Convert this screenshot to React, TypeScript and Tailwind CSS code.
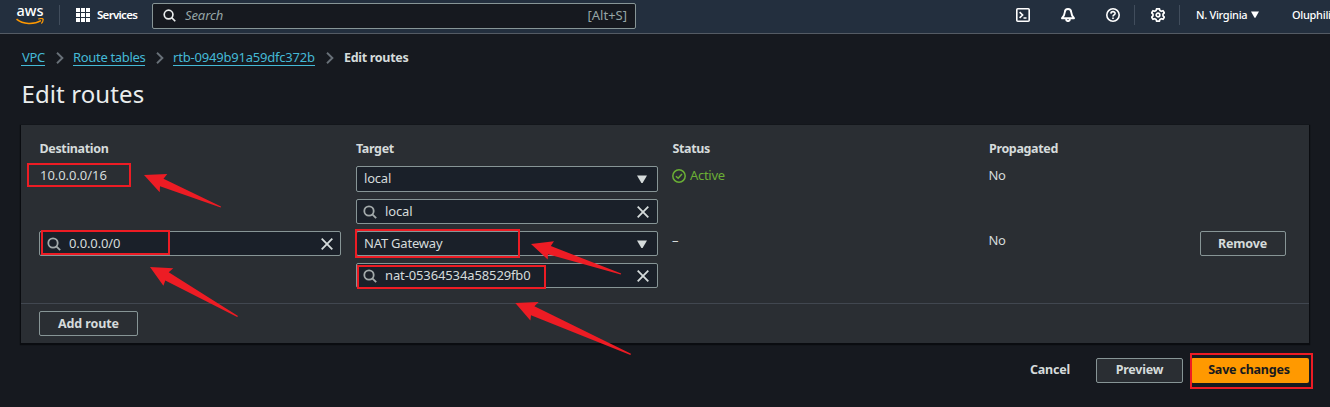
import type { ReactNode } from 'react';

const SearchIcon = ({ className }: { className: string }) => (
  <svg className={className} viewBox="0 0 14 14" fill="none" stroke="currentColor" strokeWidth="1.8">
    <circle cx="6" cy="6" r="4.7" />
    <path d="M9.3 9.3 13.2 13.2" />
  </svg>
);

const CloseIcon = () => (
  <svg className="size-3 shrink-0" viewBox="0 0 12 12" fill="none" stroke="currentColor" strokeWidth="1.8">
    <path d="M.7.7 11.3 11.3M11.3.7.7 11.3" />
  </svg>
);

const Caret = ({ className }: { className: string }) => (
  <svg className={className} viewBox="0 0 10 8" fill="currentColor">
    <path d="M0 .4h10L5.6 8H4.4Z" />
  </svg>
);

const Crumb = ({ children, className }: { children: ReactNode; className: string }) => (
  <a className={`block h-4 border-b border-[#44b9d6] leading-[15px] text-[#44b9d6] ${className}`}>{children}</a>
);

const Chevron = () => (
  <svg className="mr-[9px] ml-[11px] h-3 w-2 shrink-0 text-[#687078]" viewBox="0 0 8 12" fill="none" stroke="currentColor" strokeWidth="1.9">
    <path d="M1 .8 6.4 6 1 11.2" />
  </svg>
);

const ColumnTitle = ({ children }: { children: ReactNode }) => (
  <div className="pt-[15px] pl-[0.5px] text-[12.5px] font-bold tracking-[-0.35px]">{children}</div>
);

const SelectBox = ({ children, height }: { children: ReactNode; height: string }) => (
  <div className={`flex w-[302px] items-center justify-between rounded-[2px] border border-[#879596] bg-[#1a2029] pr-[10px] pl-[7.5px] ${height}`}>
    <span className="pb-[2px] tracking-[-0.2px]">{children}</span>
    <Caret className="h-2 w-[10px]" />
  </div>
);

const SearchBox = ({ children, inset = 'pr-[8px] pl-[6.5px]' }: { children: ReactNode; inset?: string }) => (
  <div className={`flex h-[25px] w-[302px] items-center rounded-[2px] border border-[#879596] bg-[#1a2029] ${inset}`}>
    <SearchIcon className="mt-px mr-2 size-[14px] shrink-0 text-[#a3aaab]" />
    <span className="grow pb-[2px] tracking-[-0.12px]">{children}</span>
    <CloseIcon />
  </div>
);

const Highlight = ({ className }: { className: string }) => (
  <div className={`absolute border-2 border-[#ed1c24] ${className}`} />
);

const arrows = [
  '144,175 167.3,174 163.5,178.7 221,206.5 220.7,207.6 160,186.3 159.7,192.2',
  '150,267 173.3,268.3 168.7,272.3 238,316 237.2,317 165.3,280.5 163.4,285.8',
  '531,244 554,241.3 550.8,246 621.2,273.5 620.7,274.5 548,254.3 547.7,259.4',
  '515.3,303 538.7,302 534.4,306.3 631,353.8 630.4,355 531,315.3 530.4,320.4',
];

export default function App() {
  return (
    <div className="relative h-[407px] w-[1330px] overflow-hidden bg-[#16191f] font-['Noto_Sans',sans-serif] text-[13px] leading-[18px] whitespace-nowrap text-[#d5dbdb]">
      <header className="flex h-[34px] items-center border-b border-[#545b64] bg-[#232f3e] pb-1 text-white *:shrink-0">
        <div className="ml-4 flex w-7 flex-col items-center">
          <span className="h-[13px] text-[14.5px] leading-[11px] font-medium">aws</span>
          <svg className="h-[7px] w-7" viewBox="0 0 28 7" fill="none" stroke="#ff9900" strokeWidth="1.6">
            <path d="M.5 1.2C7 6.6 18 6.8 25 2.6" />
            <path d="M22.3 1.1C25 .2 28 .2 27 2.2 27 3.4 26.2 4.7 25.3 5.5" strokeWidth="1.2" />
          </svg>
        </div>
        <div className="ml-[15px] h-5 w-px bg-[#414d5c]" />
        <svg className="ml-4 size-[14px]" viewBox="0 0 14 14" fill="currentColor">
          <path d="M0 0h4v4H0zM5 0h4v4H5zM10 0h4v4h-4zM0 5h4v4H0zM5 5h4v4H5zM10 5h4v4h-4zM0 10h4v4H0zM5 10h4v4H5zM10 10h4v4h-4z" />
        </svg>
        <span className="ml-[7px] w-[41px] text-[11.5px] font-semibold tracking-[-0.7px]">Services</span>
        <div className="mt-[2px] ml-[14px] flex h-[26px] w-[484px] items-center rounded-[2px] border border-[#879596] bg-[#16191f] px-[10px] pb-px text-[#95a5a6]">
          <SearchIcon className="size-[13px] text-[#eaeded]" />
          <span className="ml-[9px] grow pb-px tracking-[-0.1px] italic">Search</span>
          <span className="mr-[-2px] pb-px">[Alt+S]</span>
        </div>
        <div className="ml-[380px] flex items-center">
          <svg className="size-[14px]" viewBox="0 0 14 14" fill="none" stroke="currentColor" strokeWidth="1.6">
            <rect x=".8" y=".8" width="12.4" height="12.4" rx="1" />
            <path d="M3.6 4.2 6.6 7 3.6 9.8M7.5 10h3" />
          </svg>
          <svg className="ml-[31px] size-[14px]" viewBox="0 0 14 14" fill="none" stroke="currentColor" strokeWidth="1.9" strokeLinejoin="round">
            <path d="M7 1C4.7 1 3.9 2.6 3.8 4.2 3.6 6.6 2.6 8.4 1 10.2H13C11.4 8.4 10.4 6.6 10.2 4.2 10.1 2.6 9.3 1 7 1ZM5 10.5C5 14 9 14 9 10.5" />
          </svg>
          <svg className="ml-[31px] size-[14px]" viewBox="0 0 14 14" fill="none" stroke="currentColor" strokeWidth="1.6">
            <circle cx="7" cy="7" r="6.2" />
            <path d="M4.9 5.6C5 2.9 9.1 3 9.1 5.4 9.1 6.9 7 6.9 7 8.5M7 9.6V11" />
          </svg>
          <div className="ml-[14px] h-5 w-px bg-[#414d5c]" />
          <svg className="ml-4 size-[14px]" viewBox="0 0 14 14" fill="none" stroke="currentColor" strokeWidth="1.7" strokeLinejoin="round">
            <path d="M5.6.8H8.4L8.9 2.6 10.3 3.3 12 2.7 13.3 4.8 12 6.2V7.8L13.3 9.2 12 11.3 10.3 10.7 8.9 11.4 8.4 13.2H5.6L5.1 11.4 3.7 10.7 2 11.3.7 9.2 2 7.8V6.2L.7 4.8 2 2.7 3.7 3.3 5.1 2.6Z" />
            <circle cx="7" cy="7" r="1.8" />
          </svg>
          <div className="ml-[14px] h-5 w-px bg-[#414d5c]" />
          <span className="ml-4 w-[52px] text-[11px] font-medium tracking-[-0.3px]">N. Virginia</span>
          <Caret className="ml-[3px] h-[7px] w-2" />
          <span className="ml-[33px] text-[11px] font-medium tracking-[-0.3px]">Oluphili</span>
        </div>
      </header>

      <nav className="mt-[15px] flex h-[18px] items-center pl-[21px]">
        <Crumb className="w-[24px] pl-px tracking-[-0.3px]">VPC</Crumb>
        <Chevron />
        <Crumb className="w-[72px] tracking-[-0.32px]">Route tables</Crumb>
        <Chevron />
        <Crumb className="w-[142px] tracking-[-0.2px]">rtb-0949b91a59dfc372b</Crumb>
        <Chevron />
        <span className="ml-px text-[12.5px] font-bold tracking-[-0.3px]">Edit routes</span>
      </nav>
      <h1 className="mt-3 ml-[21.5px] h-[30px] text-[24px] leading-[30px] tracking-[0.1px] text-[#eaeded]">Edit routes</h1>

      <main className="mt-4 ml-[21px] h-[218px] w-[1288px] bg-[#2a2e33] shadow-[0_1px_1px_1px_#0a0c10]">
        <div className="grid h-[179px] grid-cols-[316.5px_316.5px_316.5px_211px_86px] grid-rows-[41px_65px_72px] border-b border-[#414750] pl-[18px]">
          <ColumnTitle>Destination</ColumnTitle>
          <ColumnTitle>Target</ColumnTitle>
          <ColumnTitle>Status</ColumnTitle>
          <ColumnTitle>Propagated</ColumnTitle>
          <div />

          <div className="pl-px tracking-[-0.05px]">10.0.0.0/16</div>
          <div className="flex flex-col gap-[7px]">
            <SelectBox height="h-[26px]">local</SelectBox>
            <SearchBox>local</SearchBox>
          </div>
          <div className="flex h-[20px] items-center gap-1 text-[#6aaf35]">
            <svg className="size-[14px]" viewBox="0 0 14 14" fill="none" stroke="currentColor" strokeWidth="1.5">
              <circle cx="7" cy="7" r="6.2" />
              <path d="M3.9 7.2 6.2 9.3 10 4.9" />
            </svg>
            <span className="pb-[2px] tracking-[-0.3px]">Active</span>
          </div>
          <div className="tracking-[-0.4px]">No</div>
          <div />

          <SearchBox inset="pr-[7px] pl-[7px]">0.0.0.0/0</SearchBox>
          <div className="flex flex-col gap-[7px]">
            <SelectBox height="h-[25px]">NAT Gateway</SelectBox>
            <SearchBox>nat-05364534a58529fb0</SearchBox>
          </div>
          <div>–</div>
          <div className="tracking-[-0.4px]">No</div>
          <button className="h-[25px] rounded-[2px] border border-[#879596] text-[12.5px] font-bold tracking-[-0.2px]">Remove</button>
        </div>
        <button className="mt-[7px] ml-[18px] h-[25px] w-[99px] rounded-[2px] border border-[#879596] text-[12.5px] font-bold tracking-[-0.1px]">Add route</button>
      </main>

      <footer className="mt-[15px] flex h-[25px] items-center justify-end pr-[21px] text-[12.5px] font-bold tracking-[-0.2px]">
        <button className="mr-[26px] w-[40px] pb-[2px]">Cancel</button>
        <button className="h-[25px] w-[87px] rounded-[2px] border border-[#879596] bg-[#2a2e33] pb-[2px]">Preview</button>
        <button className="ml-2 h-[25px] w-[118px] rounded-[2px] bg-[#ff9900] pr-[2px] pb-[2px] text-[#16191f]">Save changes</button>
      </footer>

      <Highlight className="top-[163px] left-[27px] h-[24px] w-[104px]" />
      <Highlight className="top-[230px] left-[41px] h-[25px] w-[129px]" />
      <Highlight className="top-[229px] left-[355px] h-[29px] w-[165px]" />
      <Highlight className="top-[265px] left-[357px] h-[24px] w-[189px]" />
      <Highlight className="top-[353px] left-[1190px] h-[36px] w-[123px]" />
      <svg className="pointer-events-none absolute inset-0 h-[407px] w-[1330px]" fill="#ed1c24">
        {arrows.map((points) => <polygon key={points} points={points} />)}
      </svg>
    </div>
  );
}
